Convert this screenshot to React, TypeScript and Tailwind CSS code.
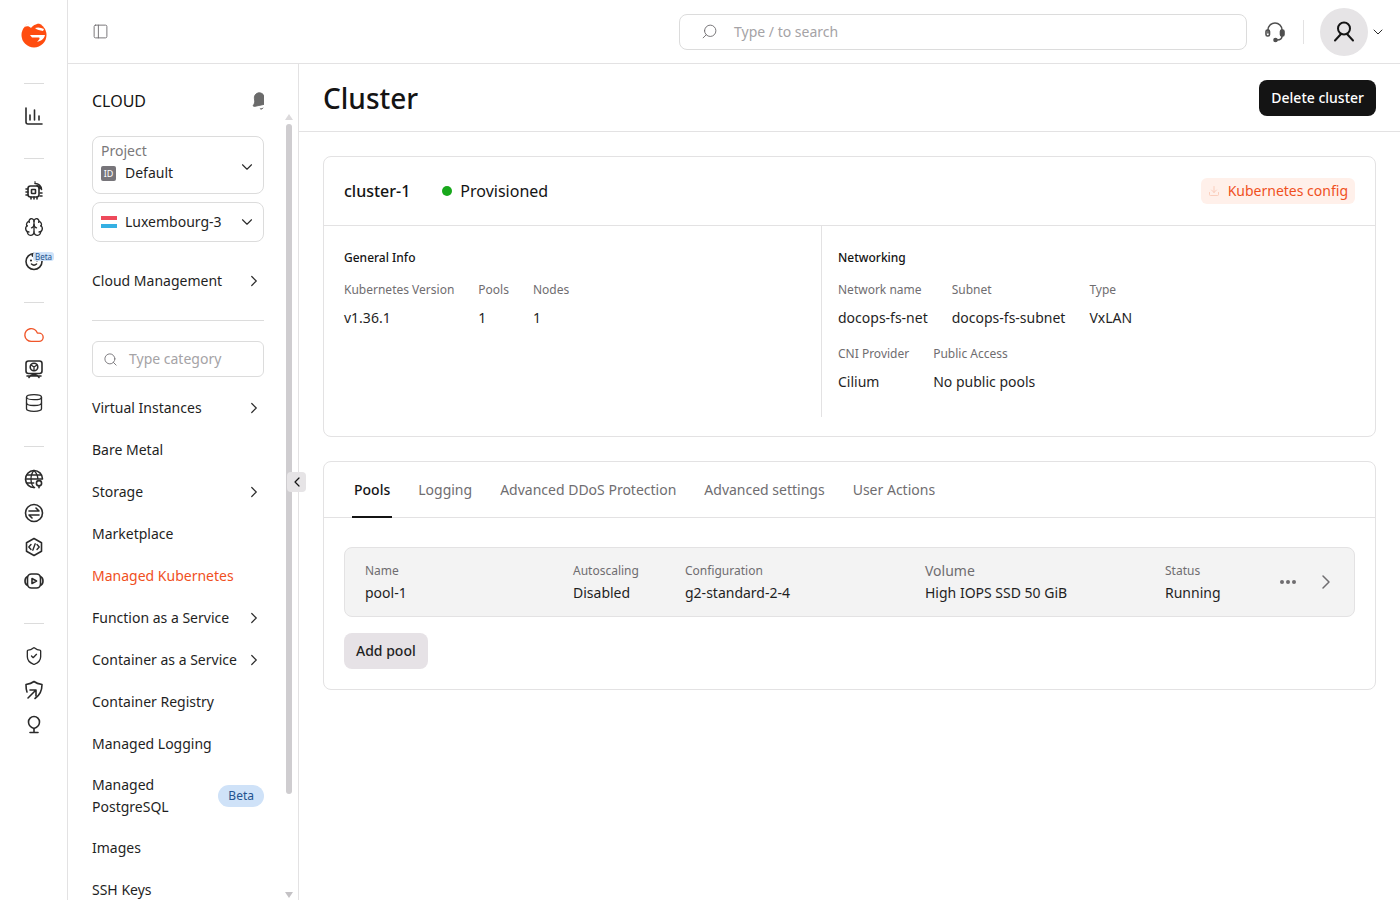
import type { ReactNode } from 'react'
import {
  Bell,
  Brain,
  ChevronDown,
  ChevronLeft,
  ChevronRight,
  Cloud,
  Database,
  Download,
  PanelLeft,
  Search,
  ShieldCheck,
} from 'lucide-react'

const strokeProps = {
  fill: 'none',
  stroke: 'currentColor',
  strokeWidth: 1.6,
  strokeLinecap: 'round' as const,
  strokeLinejoin: 'round' as const,
}

const Svg = ({ children, size = 20 }: { children: ReactNode; size?: number }) => (
  <svg width={size} height={size} viewBox="0 0 20 20" {...strokeProps}>
    {children}
  </svg>
)

const Logo = () => (
  <svg width="26" height="30" viewBox="0 0 26 30">
    <circle cx="13" cy="15" r="12.5" fill="#ff4c0f" />
    <path d="M3 7 C8 1 14 1 22 3 C17 3 12 5 10 8 C8 6 6 6 3 7Z" fill="#fff" />
    <path d="M9 15 H24 C23 19 20 21 16 22 C19 19 19 18 18 17.5 H11 Z" fill="#fff" />
    <path d="M14 8 C17 7 20 7.500 23 9 L22 11 C19 10 16 10 14 8Z" fill="#fff" />
  </svg>
)

const ChartIcon = () => (
  <Svg>
    <path d="M2 2v14a2 2 0 0 0 2 2h14" />
    <path d="M6 14V9M10.500 14V4M15 14v-4" />
  </Svg>
)

const ChipIcon = () => (
  <Svg>
    <rect x="4" y="5" width="11" height="11" rx="2.500" />
    <rect x="7.500" y="8.500" width="4" height="4" rx="0.500" />
    <path d="M2 8h2M2 11h2M2 14h2M7 16v2M10 16v2M13 16v2M16 12h2M16 15h2" />
    <path d="M11 2.500c3.500 0 6 2.500 6.500 6M11 1c-0 0 0 0 0 0M13 4.500c1.500.3 2.500 1.300 2.800 3" />
  </Svg>
)

const FaceIcon = () => (
  <Svg>
    <circle cx="10" cy="10.500" r="8" />
    <path d="M10 2.500c-2 0-2.500 2.500-.5 3" />
    <path d="M7.500 13c1.500 1.300 3.500 1.300 5 0" />
    <path d="M7 9.500h.01M13 9.500h.01" strokeWidth={2.2} />
  </Svg>
)

const MonitorIcon = () => (
  <Svg>
    <rect x="2" y="2" width="16" height="12.500" rx="2.500" />
    <circle cx="10" cy="8" r="3.800" />
    <path d="M10 8V11.500M10 8l-3-2M10 8l3-2" strokeWidth={1.300} />
    <path d="M5 18.500c1-2.500 2-3 5-3s4 .5 5 3M3 17h14" />
  </Svg>
)

const GlobeIcon = () => (
  <Svg>
    <path d="M10.500 18.500A8.500 8.500 0 1 1 18.500 10" />
    <path d="M1.800 10h16M10 1.500c-4 4-4 13 0 17M10 1.500c2.800 2.800 3.800 6 3.800 8.500M2.800 6h14M2.800 14h7" strokeWidth={1.300} />
    <circle cx="15" cy="14.200" r="2.600" />
    <path d="M15 16.800v2" />
  </Svg>
)

const SwapIcon = () => (
  <Svg>
    <circle cx="10" cy="10" r="8.500" />
    <path d="M5 8h10l-3-3M15 12H5l3 3" />
  </Svg>
)

const CodeIcon = () => (
  <Svg>
    <path d="M10 1.500l7.500 4.200v8.600L10 18.500l-7.500-4.200V5.700z" />
    <path d="M7 7.500L4.800 10 7 12.500M13 7.500l2.200 2.500-2.200 2.500M11.200 6.800l-2.400 6.400" strokeWidth={1.400} />
  </Svg>
)

const PlayIcon = () => (
  <Svg>
    <rect x="3.500" y="3" width="13" height="14" rx="4" />
    <path d="M3.500 5.500C1.500 6.500 1 8 1 10s.5 3.500 2.500 4.500M16.500 5.500c2 1 2.500 2.500 2.500 4.500s-.5 3.500-2.500 4.500" />
    <path d="M8 7.500l4.500 2.500L8 12.500z" />
  </Svg>
)

const ShieldArrowIcon = () => (
  <Svg>
    <path d="M3 12c-.6-1.500-1-3.500-1-7.500C5 4 8 3 10 1.500c2 1.500 5 2.500 8 3 0 7.500-2.500 11-7 14" />
    <path d="M4 18l8-8M6 10h6v6" />
  </Svg>
)

const BulbIcon = () => (
  <Svg>
    <path d="M10 14.500c-3.200-1-5.500-3-5.500-6.500a5.500 5.500 0 0 1 11 0c0 3.500-2.300 5.500-5.500 6.500z" />
    <path d="M10 14.500v4M6 18.500h8" />
  </Svg>
)

const HeadsetIcon = () => (
  <svg width="22" height="22" viewBox="0 0 22 22" {...strokeProps} className="text-[#4f4f4f]">
    <path d="M4 12V9a7 7 0 0 1 14 0v3" />
    <rect x="2" y="9" width="3.500" height="6" rx="1.500" />
    <rect x="16.500" y="9" width="3.500" height="6" rx="1.500" fill="#4f4f4f" />
    <path d="M18 15c0 3-2 4-5 4" />
    <circle cx="11.500" cy="19" r="1.500" fill="#4f4f4f" />
  </svg>
)

const UserIcon = () => (
  <svg width="24" height="24" viewBox="0 0 24 24" {...strokeProps} strokeWidth={2} className="text-[#141414]">
    <circle cx="12" cy="8.500" r="6" />
    <path d="M9 14l-6 6.500M15 14l6 6.500" />
  </svg>
)

const Divider = () => <div className="w-5 h-px bg-[#dcdcdc] shrink-0" />

const RailIcon = ({ children, className }: { children: ReactNode; className: string }) => (
  <div className={`relative flex items-center justify-center w-full shrink-0 text-[#2b2b2b] ${className}`}>{children}</div>
)

const Rail = () => (
  <aside className="w-[68px] shrink-0 border-r border-[#e3e2e3] h-full flex flex-col items-center bg-white">
    <div className="h-[83px] shrink-0 pt-5">
      <Logo />
    </div>
    <Divider />
    <RailIcon className="h-[34px] mt-[15px] mb-[25px]">
      <ChartIcon />
    </RailIcon>
    <Divider />
    <RailIcon className="h-[34px] mt-[15px]">
      <ChipIcon />
    </RailIcon>
    <RailIcon className="h-[38px]">
      <Brain size={20} strokeWidth={1.6} />
    </RailIcon>
    <RailIcon className="h-[30px] mb-[26px]">
      <FaceIcon />
      <span className="absolute left-[33px] top-[6px] rounded-[3px] bg-[#cfe2f8] px-[2px] text-[8px] leading-[9px] text-[#24548f]">
        Beta
      </span>
    </RailIcon>
    <Divider />
    <RailIcon className="h-[34px] mt-[15px] text-[#f0562a]">
      <Cloud size={22} strokeWidth={1.5} />
    </RailIcon>
    <RailIcon className="h-[34px]">
      <MonitorIcon />
    </RailIcon>
    <RailIcon className="h-[34px] mb-[26px]">
      <Database size={20} strokeWidth={1.6} />
    </RailIcon>
    <Divider />
    <RailIcon className="h-[34px] mt-[15px]">
      <GlobeIcon />
    </RailIcon>
    <RailIcon className="h-[34px]">
      <SwapIcon />
    </RailIcon>
    <RailIcon className="h-[34px]">
      <CodeIcon />
    </RailIcon>
    <RailIcon className="h-[33px] mb-[26px]">
      <PlayIcon />
    </RailIcon>
    <Divider />
    <RailIcon className="h-[34px] mt-[15px]">
      <ShieldCheck size={20} strokeWidth={1.6} />
    </RailIcon>
    <RailIcon className="h-[34px]">
      <ShieldArrowIcon />
    </RailIcon>
    <RailIcon className="h-[34px]">
      <BulbIcon />
    </RailIcon>
  </aside>
)

const NavItem = ({ label, arrow, active }: { label: string; arrow?: boolean; active?: boolean }) => (
  <div className="h-[42px] flex items-center justify-between shrink-0">
    <span className={active ? 'text-[#f0501e]' : 'text-[#1f1f1f]'}>{label}</span>
    {arrow && <ChevronRight size={18} strokeWidth={1.6} className="text-[#2b2b2b] mr-[1px]" />}
  </div>
)

const Sidebar = () => (
  <aside className="relative w-[231px] shrink-0 border-r border-[#e3e2e3] h-full">
    <div className="h-full overflow-hidden pl-6 w-[196px] text-sm leading-[22px]">
      <div className="h-[72px] flex items-center justify-between pt-[2px] shrink-0">
        <span className="text-base text-[#141414]">CLOUD</span>
        <span className="relative w-5 h-5 -mr-[14px]">
          <Bell size={20} fill="#6b6b6b" strokeWidth={1} className="text-[#6b6b6b] -rotate-12 -ml-[8px]" />
          <span className="absolute right-[0px] top-[4px] w-[11px] h-[11px] rounded-full bg-[#ff4c0f]" />
        </span>
      </div>
      <div className="h-[58px] border border-[#dcdcdc] rounded-lg px-2 pt-[4px] relative">
        <div className="text-[#7a787a] leading-[20px]">Project</div>
        <div className="flex items-center gap-[9px] leading-[24px] text-[#1f1f1f]">
          <span className="w-[15px] h-[15px] rounded-[2px] bg-[#77757a] text-white text-[9px] leading-[15px] text-center">ID</span>
          Default
        </div>
        <ChevronDown size={18} strokeWidth={1.5} className="absolute right-[7px] top-[21px] text-[#2b2b2b]" />
      </div>
      <div className="h-10 mt-2 border border-[#dcdcdc] rounded-lg pl-2 pr-[7px] flex items-center justify-between text-[#1f1f1f]">
        <span className="flex items-center gap-[8px]">
          <span className="w-4 h-3 flex flex-col">
            <span className="h-1 bg-[#ee4a5b]" />
            <span className="h-1 bg-white" />
            <span className="h-1 bg-[#35b0e3]" />
          </span>
          Luxembourg-3
        </span>
        <ChevronDown size={18} strokeWidth={1.5} className="text-[#2b2b2b]" />
      </div>
      <div className="mt-[18px]">
        <NavItem label="Cloud Management" arrow />
      </div>
      <div className="h-px bg-[#dcdcdc] mt-[18px]" />
      <div className="h-9 mt-5 mb-[10px] border border-[#dcdcdc] rounded-md px-[10px] flex items-center gap-[11px] text-[#a5a3a6]">
        <Search size={15} strokeWidth={1.5} className="text-[#77757a]" />
        Type category
      </div>
      <NavItem label="Virtual Instances" arrow />
      <NavItem label="Bare Metal" />
      <NavItem label="Storage" arrow />
      <NavItem label="Marketplace" />
      <NavItem label="Managed Kubernetes" active />
      <NavItem label="Function as a Service" arrow />
      <NavItem label="Container as a Service" arrow />
      <NavItem label="Container Registry" />
      <NavItem label="Managed Logging" />
      <div className="h-[62px] flex items-center justify-between text-[#1f1f1f]">
        <span>
          Managed
          <br />
          PostgreSQL
        </span>
        <span className="h-[22px] rounded-full bg-[#cfe2f8] px-[10px] text-xs leading-[22px] text-[#24548f]">Beta</span>
      </div>
      <NavItem label="Images" />
      <NavItem label="SSH Keys" />
    </div>
    {/* scrollbar */}
    <div className="absolute right-[6px] top-[60px] w-[6px] h-[670px] rounded-full bg-[#cfcdd0]" />
    <div className="absolute right-[5px] top-[50px] w-0 h-0 border-x-4 border-x-transparent border-b-[6px] border-b-[#dcdadc]" />
    <div className="absolute right-[5px] bottom-[2px] w-0 h-0 border-x-4 border-x-transparent border-t-[6px] border-t-[#c4c2c5]" />
    <div className="absolute -right-[8px] top-[408px] w-[19px] h-[20px] rounded-[4px] bg-[#e6e4e6] flex items-center justify-center text-[#141414]">
      <ChevronLeft size={16} strokeWidth={1.8} />
    </div>
  </aside>
)

const Field = ({ label, value }: { label: string; value: string }) => (
  <div>
    <div className="text-xs leading-[18px] text-[#6f6d70]">{label}</div>
    <div className="mt-[9px] text-sm leading-[20px] text-[#1f1f1f]">{value}</div>
  </div>
)

const InfoCard = () => (
  <section className="rounded-lg border border-[#e3e2e3] h-[281px]">
    <div className="h-[69px] border-b border-[#e3e2e3] px-5 flex items-center">
      <span className="text-base font-medium text-[#141414]">cluster-1</span>
      <span className="ml-8 w-[10px] h-[10px] rounded-full bg-[#18a81c]" />
      <span className="ml-2 text-base text-[#141414]">Provisioned</span>
      <span className="ml-auto h-[26px] rounded-md bg-[#fff0ea] px-[7px] flex items-center gap-2 text-sm text-[#f0501e]">
        <Download size={12} strokeWidth={1.5} className="text-[#f8c3ad]" />
        Kubernetes config
      </span>
    </div>
    <div className="flex">
      <div className="w-[498px] h-[191px] border-r border-[#e3e2e3] pl-5 pt-[22px]">
        <h3 className="text-xs font-medium leading-[20px] text-[#141414]">General Info</h3>
        <div className="flex gap-6 mt-[13px]">
          <Field label="Kubernetes Version" value="v1.36.1" />
          <Field label="Pools" value="1" />
          <Field label="Nodes" value="1" />
        </div>
      </div>
      <div className="pl-4 pt-[22px]">
        <h3 className="text-xs font-medium leading-[20px] text-[#141414]">Networking</h3>
        <div className="flex gap-6 mt-[13px]">
          <Field label="Network name" value="docops-fs-net" />
          <Field label="Subnet" value="docops-fs-subnet" />
          <Field label="Type" value="VxLAN" />
        </div>
        <div className="flex gap-6 mt-[17px]">
          <Field label="CNI Provider" value="Cilium" />
          <Field label="Public Access" value="No public pools" />
        </div>
      </div>
    </div>
  </section>
)

const PoolCol = ({ label, value, big, className }: { label: string; value: string; big?: boolean; className: string }) => (
  <div className={className}>
    <div className={`${big ? 'text-sm' : 'text-xs'} leading-[18px] text-[#6f6d70]`}>{label}</div>
    <div className="mt-[3px] text-sm leading-[20px] text-[#1f1f1f]">{value}</div>
  </div>
)

const PoolsCard = () => (
  <section className="mt-6 rounded-lg border border-[#e3e2e3] h-[229px]">
    <div className="h-[56px] border-b border-[#e3e2e3] flex gap-7 pl-[30px] text-sm">
      <span className="relative h-full flex items-center text-[#141414] font-medium">
        Pools
        <span className="absolute -left-[2px] -right-[2px] bottom-[-1px] h-[2px] bg-[#141414]" />
      </span>
      <span className="flex items-center text-[#6f6d70]">Logging</span>
      <span className="flex items-center text-[#6f6d70]">Advanced DDoS Protection</span>
      <span className="flex items-center text-[#6f6d70]">Advanced settings</span>
      <span className="flex items-center text-[#6f6d70]">User Actions</span>
    </div>
    <div className="px-5 pt-[29px]">
      <div className="h-[70px] rounded-lg border border-[#e3e2e3] bg-[#f3f3f3] pl-5 flex items-center">
        <PoolCol className="w-[208px]" label="Name" value="pool-1" />
        <PoolCol className="w-[112px]" label="Autoscaling" value="Disabled" />
        <PoolCol className="w-[240px]" label="Configuration" value="g2-standard-2-4" />
        <PoolCol className="w-[240px]" big label="Volume" value="High IOPS SSD 50 GiB" />
        <PoolCol className="w-[115px]" label="Status" value="Running" />
        <span className="flex gap-[2px] w-[18px]">
          <span className="w-1 h-1 rounded-full bg-[#6f6d70]" />
          <span className="w-1 h-1 rounded-full bg-[#6f6d70]" />
          <span className="w-1 h-1 rounded-full bg-[#6f6d70]" />
        </span>
        <ChevronRight size={24} strokeWidth={1.5} className="ml-[16px] text-[#6f6d70]" />
      </div>
      <button className="mt-4 h-9 rounded-lg bg-[#e6e2e6] px-3 text-sm font-medium text-[#1f1f1f]">Add pool</button>
    </div>
  </section>
)

const App = () => (
  <div className="flex h-[900px] w-full overflow-hidden bg-white font-['Noto_Sans',sans-serif]">
    <Rail />
    <div className="flex-1 min-w-0 flex flex-col">
      <header className="h-[64px] shrink-0 border-b border-[#e3e2e3] flex items-center pl-6 pr-[14px]">
        <PanelLeft size={17} strokeWidth={1.3} className="text-[#6f6d70]" />
        <div className="ml-auto w-[568px] h-9 rounded-lg border border-[#dcdcdc] flex items-center pl-[21px] gap-[16px] text-sm text-[#a5a3a6]">
          <Search size={17} strokeWidth={1.3} className="text-[#6f6d70] -scale-x-100" />
          Type / to search
        </div>
        <div className="ml-[17px]">
          <HeadsetIcon />
        </div>
        <div className="ml-[17px] w-px h-6 bg-[#e3e2e3]" />
        <div className="ml-4 w-12 h-12 rounded-full bg-[#e6e4e6] flex items-center justify-center">
          <UserIcon />
        </div>
        <ChevronDown size={16} strokeWidth={1.5} className="ml-[2px] text-[#2b2b2b]" />
      </header>
      <div className="flex-1 min-h-0 flex">
        <Sidebar />
        <main className="flex-1 min-w-0">
          <div className="h-[68px] border-b border-[#e3e2e3] flex items-center justify-between pl-6 pr-6">
            <h1 className="text-[28px] leading-9 font-medium text-[#141414]">Cluster</h1>
            <button className="h-9 rounded-lg bg-[#141414] px-3 text-sm font-medium text-white">Delete cluster</button>
          </div>
          <div className="pt-6 pl-6 pr-6">
            <InfoCard />
            <PoolsCard />
          </div>
        </main>
      </div>
    </div>
  </div>
)

export default App
